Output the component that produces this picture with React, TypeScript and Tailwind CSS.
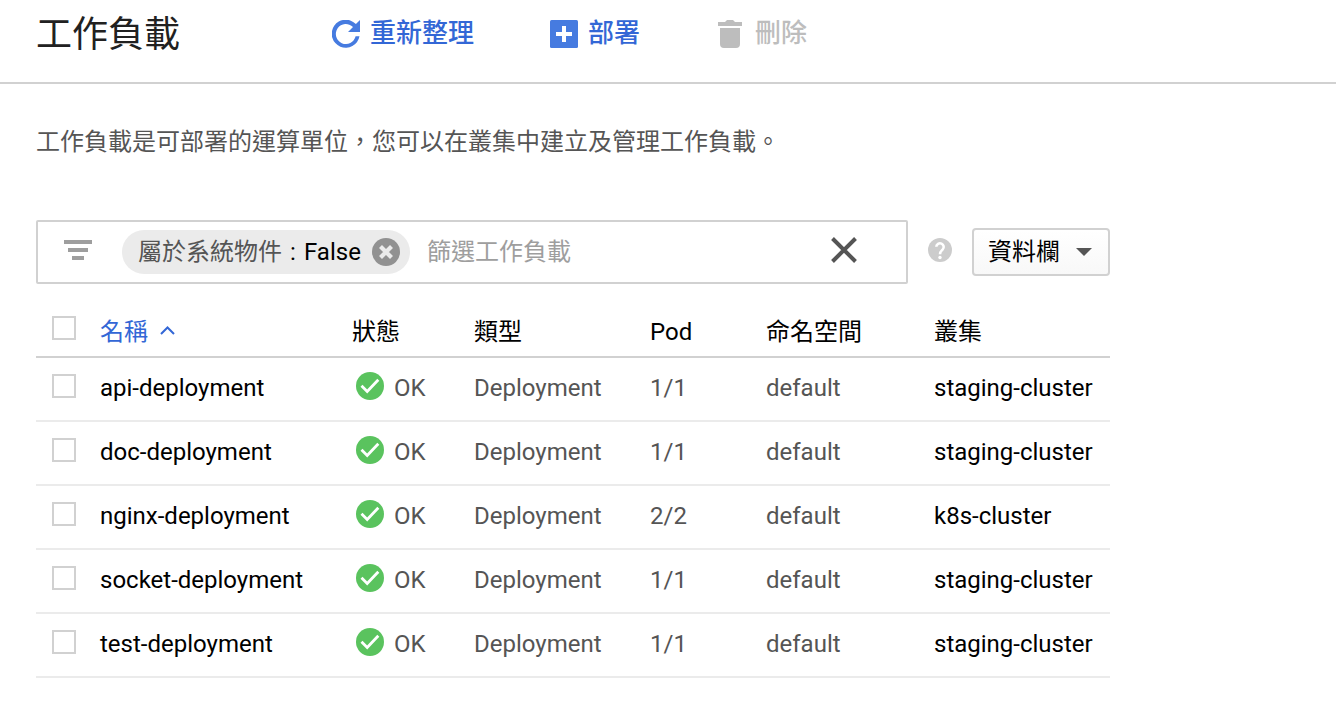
import type { ReactNode } from "react";

type Workload = { name: string; type: string; pods: string; namespace: string; cluster: string };

const workloads: Workload[] = [
  { name: "api-deployment", type: "Deployment", pods: "1/1", namespace: "default", cluster: "staging-cluster" },
  { name: "doc-deployment", type: "Deployment", pods: "1/1", namespace: "default", cluster: "staging-cluster" },
  { name: "nginx-deployment", type: "Deployment", pods: "2/2", namespace: "default", cluster: "k8s-cluster" },
  { name: "socket-deployment", type: "Deployment", pods: "1/1", namespace: "default", cluster: "staging-cluster" },
  { name: "test-deployment", type: "Deployment", pods: "1/1", namespace: "default", cluster: "staging-cluster" },
];

const columns = "grid grid-cols-[64px_252px_122px_176px_116px_168px_176px]";

function Checkbox() {
  return <span role="checkbox" aria-checked="false" className="ml-4 block size-6 border-2 border-[#d1d1d1] bg-white" />;
}

function RefreshIcon() {
  return (
    <svg width="28" height="28" viewBox="0 0 28 28" aria-hidden="true">
      <path d="M23.9 4.1A14 14 0 1 0 27.5 16.3H23.6A10 10 0 1 1 21 7L16 12H28V0Z" fill="#467be0" />
    </svg>
  );
}

function AddIcon() {
  return (
    <svg width="28" height="28" viewBox="0 0 28 28" aria-hidden="true">
      <rect width="28" height="28" rx="1.5" fill="#467be0" />
      <path d="M12 6h4v6h6v4h-6v6h-4v-6H6v-4h6z" fill="#fff" />
    </svg>
  );
}

function TrashIcon() {
  return (
    <svg width="24" height="28" viewBox="0 0 24 28" aria-hidden="true">
      <path d="M0 2h7l2-2h6l2 2h7v4H0zM2 8h20v16a4 4 0 0 1-4 4H6a4 4 0 0 1-4-4z" fill="#bdbdbd" />
    </svg>
  );
}

function CheckIcon() {
  return (
    <svg width="28" height="28" viewBox="0 0 28 28" aria-hidden="true">
      <circle cx="14" cy="14" r="14" fill="#5ac35e" />
      <path d="M5.5 13.8l5.7 5.7L22.3 7.8" fill="none" stroke="#fff" strokeWidth="2.8" />
    </svg>
  );
}

function Action({ icon, label, className }: { icon: ReactNode; label: string; className: string }) {
  return (
    <button className={`flex items-start text-[26px] leading-[26px] font-medium ${className}`}>
      {icon}
      <span>{label}</span>
    </button>
  );
}

function Toolbar() {
  return (
    <header className="flex h-[84px] items-start border-b-2 border-[#d1d1d1] pl-9">
      <h1 className="mt-[9px] w-[296px] text-[36px] leading-[52px] text-[#212121]">工作負載</h1>
      <div className="mt-5 flex">
        <Action icon={<RefreshIcon />} label="重新整理" className="w-[218px] gap-[10px] text-[#3367d6]" />
        <Action icon={<AddIcon />} label="部署" className="w-[168px] gap-[10px] text-[#3367d6]" />
        <Action icon={<TrashIcon />} label="刪除" className="gap-[13px] text-[#bdbdbd]" />
      </div>
    </header>
  );
}

function FilterBar() {
  return (
    <div className="flex h-16 w-[1074px] items-center">
      <div className="flex h-16 w-[872px] items-center rounded-xs border-2 border-[#d1d1d1]">
        <svg className="mb-1 ml-[26px]" width="28" height="20" viewBox="0 0 28 20" aria-hidden="true">
          <path d="M0 0h28v4H0zM4 8h20v4H4zM8 16h12v4H8z" fill="#9e9e9e" />
        </svg>
        <div className="ml-[30px] flex h-11 w-[288px] items-center rounded-full bg-[#ebebeb] pl-4">
          <span className="w-[144px] text-[#555]">屬於系統物件</span>
          <span className="w-[22px] text-center text-black">:</span>
          <span className="w-[68px] text-black">False</span>
          <svg width="28" height="28" viewBox="0 0 28 28" aria-hidden="true">
            <circle cx="14" cy="14" r="14" fill="#919191" />
            <path d="M8.5 8.5l11 11m0-11l-11 11" stroke="#ebebeb" strokeWidth="4.2" />
          </svg>
        </div>
        <span className="ml-[17px] grow text-[#9e9e9e]">篩選工作負載</span>
        <svg className="mr-[49px] mb-1" width="26" height="26" viewBox="0 0 26 26" aria-hidden="true">
          <path d="M1.5 1.5l23 23m0-23l-23 23" stroke="#555" strokeWidth="4" />
        </svg>
      </div>
      <svg className="mb-1 ml-5" width="24" height="24" viewBox="0 0 24 24" aria-hidden="true">
        <circle cx="12" cy="12" r="12" fill="#ccc" />
        <path d="M8.3 8.8a3.700 3.700 0 1 1 6.300 2.800C13.200 13 12 13.700 12 16.300" fill="none" stroke="#fff" strokeWidth="2.600" />
        <circle cx="12" cy="19.500" r="1.700" fill="#fff" />
      </svg>
      <button className="ml-5 flex h-12 w-[138px] items-center rounded-[4px] border-2 border-[#d1d1d1] bg-linear-to-b from-white to-[#f8f8f8] pl-[14px] text-black">
        資料欄
        <svg className="mt-[-1px] ml-4" width="16" height="8" viewBox="0 0 16 8" aria-hidden="true">
          <path d="M0 0h16L8 8z" fill="#555" />
        </svg>
      </button>
    </div>
  );
}

function WorkloadTable() {
  return (
    <div role="table" className="mt-8 w-[1074px] text-[#555]">
      <div role="row" className={`${columns} h-[42px] border-b-2 border-[#d1d1d1] leading-8 text-black`}>
        <Checkbox />
        <span className="flex items-start text-[#3367d6]">
          名稱
          <svg className="mt-[10px] ml-3" width="15" height="9" viewBox="0 0 15 9" aria-hidden="true">
            <path d="M1 8l6.500-6.500L14 8" fill="none" stroke="#3367d6" strokeWidth="2" />
          </svg>
        </span>
        <span>狀態</span>
        <span>類型</span>
        <span>Pod</span>
        <span>命名空間</span>
        <span>叢集</span>
      </div>
      {workloads.map((w) => (
        <div key={w.name} role="row" className={`${columns} h-16 border-b-2 border-[#ebebeb] pt-4 leading-7`}>
          <Checkbox />
          <span className="text-black">{w.name}</span>
          <span className="flex gap-[10px] pl-1">
            <span className="-mt-0.5">
              <CheckIcon />
            </span>
            OK
          </span>
          <span>{w.type}</span>
          <span>{w.pods}</span>
          <span>{w.namespace}</span>
          <span className="text-black">{w.cluster}</span>
        </div>
      ))}
    </div>
  );
}

export default function App() {
  return (
    <div
      lang="zh-Hant"
      className="h-[714px] w-[1336px] overflow-hidden bg-white font-[Roboto,'Noto_Sans_CJK_TC',sans-serif] text-[24px] leading-8"
    >
      <Toolbar />
      <main className="pl-9">
        <p className="mt-[42px] mb-[62px] text-[#555]">工作負載是可部署的運算單位，您可以在叢集中建立及管理工作負載。</p>
        <FilterBar />
        <WorkloadTable />
      </main>
    </div>
  );
}
